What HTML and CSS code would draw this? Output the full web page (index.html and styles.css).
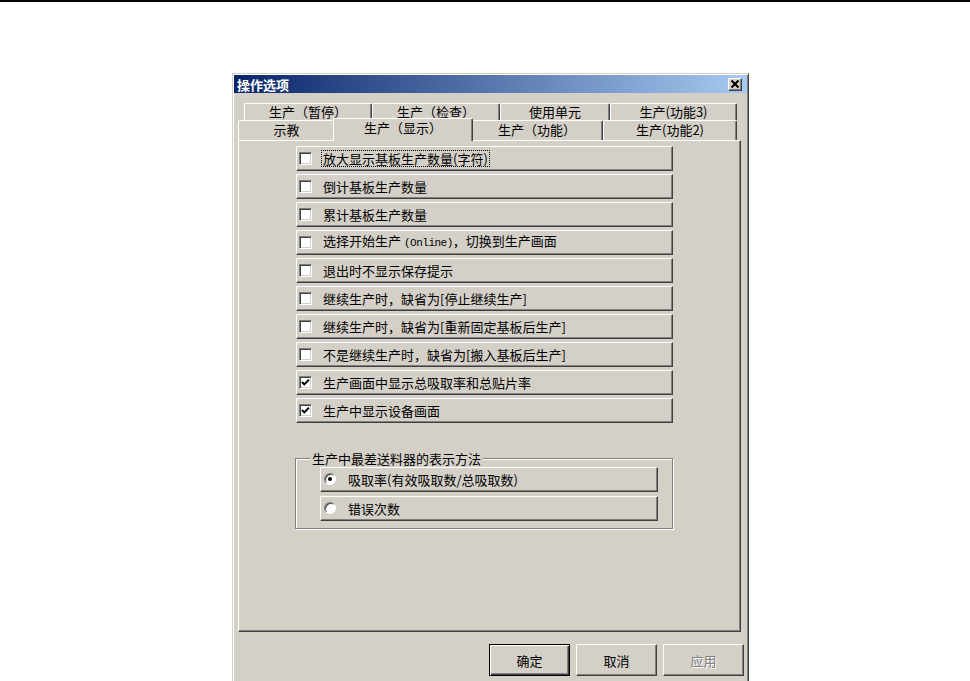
FILE: index.html
```html
<!DOCTYPE html>
<html lang="zh-CN">
<head>
<meta charset="utf-8">
<title>操作选项</title>
<link rel="stylesheet" href="styles.css">
</head>
<body>
<div class="dialog">
  <div class="titlebar">
    <span class="title">操作选项</span>
    <span class="close"><svg width="12" height="10" viewBox="0 0 12 10"><path d="M2.5 1.5 L9.5 8.5 M9.5 1.5 L2.5 8.5" stroke="#000" stroke-width="2" fill="none"/></svg></span>
  </div>
  <div class="tabs">
    <div class="tabrow back">
      <div class="tab t-a">生产（暂停）</div>
      <div class="tab t-b">生产（检查）</div>
      <div class="tab t-c">使用单元</div>
      <div class="tab t-d">生产(功能3)</div>
    </div>
    <div class="tabrow front">
      <div class="tab t-e">示教</div>
      <div class="tab t-f sel">生产（显示）</div>
      <div class="tab t-g">生产（功能）</div>
      <div class="tab t-h">生产(功能2)</div>
    </div>
  </div>
  <div class="panel">
    <div class="checklist">
      <div class="opt"><span class="cb"></span><span class="lbl focus">放大显示基板生产数量(字符)</span></div>
      <div class="opt"><span class="cb"></span><span class="lbl">倒计基板生产数量</span></div>
      <div class="opt"><span class="cb"></span><span class="lbl">累计基板生产数量</span></div>
      <div class="opt"><span class="cb"></span><span class="lbl">选择开始生产<span class="mono">(Online)</span>，切换到生产画面</span></div>
      <div class="opt"><span class="cb"></span><span class="lbl">退出时不显示保存提示</span></div>
      <div class="opt"><span class="cb"></span><span class="lbl">继续生产时，缺省为[停止继续生产]</span></div>
      <div class="opt"><span class="cb"></span><span class="lbl">继续生产时，缺省为[重新固定基板后生产]</span></div>
      <div class="opt"><span class="cb"></span><span class="lbl">不是继续生产时，缺省为[搬入基板后生产]</span></div>
      <div class="opt"><span class="cb"><svg width="11" height="11" viewBox="0 0 11 11"><path d="M2 5 L4.3 7.4 L9 2.6" stroke="#000" stroke-width="2" fill="none"/></svg></span><span class="lbl">生产画面中显示总吸取率和总贴片率</span></div>
      <div class="opt"><span class="cb"><svg width="11" height="11" viewBox="0 0 11 11"><path d="M2 5 L4.3 7.4 L9 2.6" stroke="#000" stroke-width="2" fill="none"/></svg></span><span class="lbl">生产中显示设备画面</span></div>
    </div>
    <fieldset class="group">
      <legend>生产中最差送料器的表示方法</legend>
      <div class="radios">
        <div class="opt"><span class="rb"><span class="dot"></span></span><span class="lbl rlbl">吸取率(有效吸取数/总吸取数)</span></div>
        <div class="opt"><span class="rb"></span><span class="lbl rlbl">错误次数</span></div>
      </div>
    </fieldset>
  </div>
  <div class="buttons">
    <div class="btn default">确定</div>
    <div class="btn">取消</div>
    <div class="btn disabled">应用</div>
  </div>
</div>
</body>
</html>
```
FILE: styles.css
```css
html, body {
  margin: 0;
  height: 100%;
  overflow: hidden;
  background: #fff;
}
body {
  box-sizing: border-box;
  border-top: 2px solid #000;
  font-family: "Noto Sans CJK SC", "Liberation Sans", sans-serif;
  font-size: 13px;
  color: #000;
}
.dialog {
  width: 517px;
  height: 612px;
  margin: 71px 0 0 232px;
  box-sizing: border-box;
  background: #d4d0c8;
  border: 1px solid;
  border-color: #d4d0c8 #404040 #404040 #d4d0c8;
  box-shadow: inset 1px 1px #fff, inset -1px -1px #808080;
  padding: 1px;
  display: flex;
  flex-direction: column;
}
.titlebar {
  height: 18px;
  flex: none;
  display: flex;
  align-items: center;
  justify-content: space-between;
  background: linear-gradient(to right, #0a246a, #a6caf0);
  padding: 0 5px 0 3px;
}
.title {
  color: #fff;
  font-weight: bold;
  font-size: 13px;
  line-height: 17px;
}
.close {
  width: 14px;
  height: 13px;
  box-sizing: border-box;
  background: #d4d0c8;
  border: 1px solid;
  border-color: #fff #404040 #404040 #fff;
  box-shadow: inset -1px -1px #808080;
  display: flex;
  align-items: center;
  justify-content: center;
}
.tabs {
  margin-top: 10px;
  padding-left: 4px;
  flex: none;
}
.tabrow {
  display: flex;
}
.back {
  margin-left: 6px;
  height: 17px;
}
.front {
  height: 20px;
  align-items: flex-end;
}
.tab {
  box-sizing: border-box;
  flex: none;
  background: #d4d0c8;
  border-top: 1px solid #fff;
  border-left: 1px solid #fff;
  border-right: 1px solid #404040;
  box-shadow: inset -1px 0 #808080;
  border-radius: 2px 2px 0 0;
  text-align: center;
  white-space: nowrap;
}
.back .tab {
  height: 17px;
  line-height: 15px;
}
.front .tab {
  height: 20px;
  line-height: 18px;
}
.front .tab.sel {
  height: 23px;
  margin: -2px -2px -1px;
  line-height: 18px;
  position: relative;
  z-index: 1;
}
.t-a { width: 128px; }
.t-b { width: 128px; }
.t-c { width: 110px; }
.t-d { width: 127px; }
.t-e { width: 97px; }
.t-f { width: 140px; }
.t-g { width: 132px; }
.t-h { width: 134px; }
.panel {
  flex: none;
  margin-left: 4px;
  width: 503px;
  height: 492px;
  box-sizing: border-box;
  border: 1px solid;
  border-color: #fff #404040 #404040 #fff;
  box-shadow: inset -1px -1px #808080;
  padding: 5px 0 0 56px;
}
.checklist {
  margin-left: 1px;
  width: 377px;
  display: flex;
  flex-direction: column;
  gap: 3px;
}
.opt {
  height: 25px;
  box-sizing: border-box;
  display: flex;
  align-items: center;
  border: 1px solid;
  border-color: #fff #404040 #404040 #fff;
  box-shadow: inset -1px -1px #808080;
  padding: 0 0 1px 2px;
}
.cb {
  flex: none;
  width: 13px;
  height: 13px;
  box-sizing: border-box;
  background: #fff;
  border: 1px solid;
  border-color: #808080 #fff #fff #808080;
  box-shadow: inset 1px 1px #404040, inset -1px -1px #d4d0c8;
  display: flex;
  align-items: center;
  justify-content: center;
}
.lbl {
  margin-left: 11px;
  line-height: 17px;
  white-space: nowrap;
}
.focus {
  margin-left: 9px;
  padding: 0 2px;
  outline: 1px dotted #000;
  outline-offset: -1px;
}
.mono {
  font-family: "Liberation Mono", monospace;
  font-size: 11px;
  letter-spacing: -0.5px;
  margin-left: 3px;
}
.group {
  margin: 27px 0 0 0;
  width: 378px;
  box-sizing: border-box;
  border: 1px solid #808080;
  box-shadow: inset 1px 1px #fff, 1px 1px #fff;
  padding: 0 14px 7px 14px;
}
.group legend {
  padding: 0 2px;
  line-height: 17px;
  background: #d4d0c8;
}
.radios {
  margin-left: 10px;
  width: 338px;
  display: flex;
  flex-direction: column;
  gap: 4px;
}
.rb {
  flex: none;
  margin-left: 1px;
  width: 12px;
  height: 12px;
  box-sizing: border-box;
  border-radius: 50%;
  background: #fff;
  border: 1px solid;
  border-color: #808080 #fff #fff #808080;
  box-shadow: inset 1px 1px #404040;
  display: flex;
  align-items: center;
  justify-content: center;
}
.dot {
  width: 4px;
  height: 4px;
  border-radius: 50%;
  background: #000;
}
.rlbl {
  margin-left: 12px;
}
.buttons {
  flex: none;
  display: flex;
  justify-content: flex-end;
  gap: 6px;
  margin-top: 12px;
  padding-right: 3px;
}
.btn {
  width: 81px;
  height: 32px;
  box-sizing: border-box;
  border: 1px solid;
  border-color: #fff #404040 #404040 #fff;
  box-shadow: inset -1px -1px #808080;
  display: flex;
  align-items: center;
  justify-content: center;
}
.btn.default {
  border-color: #000;
  box-shadow: inset 1px 1px #fff, inset -1px -1px #404040, inset -2px -2px #808080;
}
.btn.disabled {
  color: #808080;
  text-shadow: 1px 1px #fff;
}
```
